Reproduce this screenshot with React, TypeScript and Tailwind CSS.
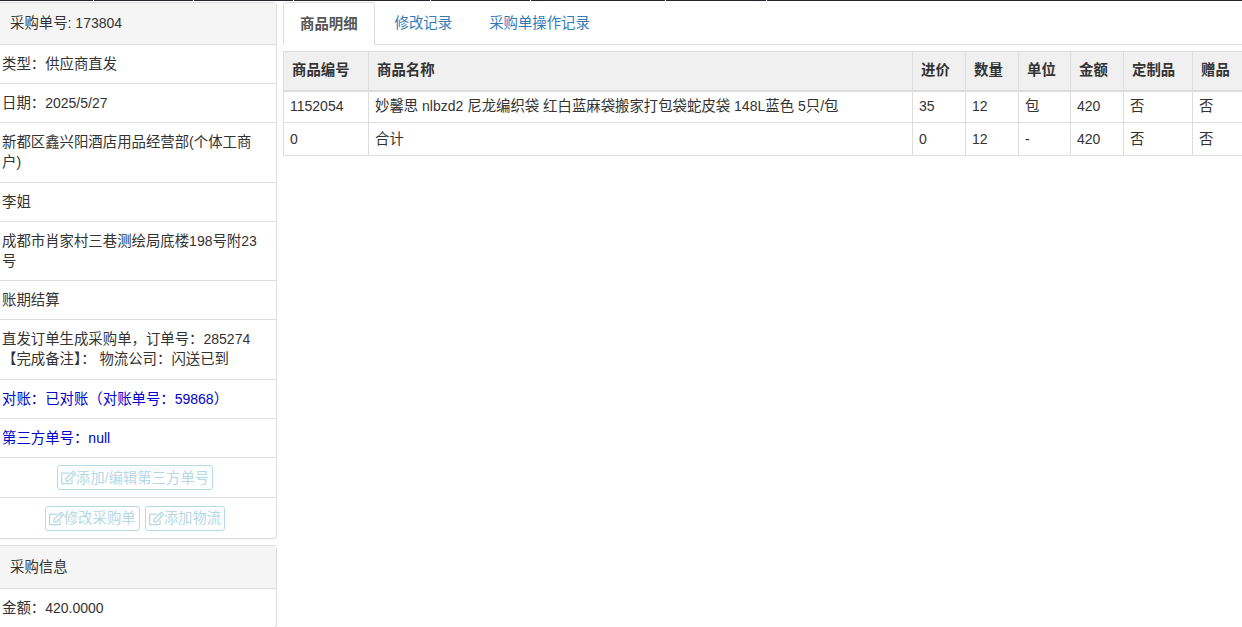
import { FaRegEdit } from 'react-icons/fa';

const font = "font-['Liberation_Sans','Noto_Sans_CJK_SC',sans-serif]";

const sideRows = [
    { text: '类型：供应商直发' },
    { text: '日期：2025/5/27' },
    { text: '新都区鑫兴阳酒店用品经营部(个体工商户)', tall: true },
    { text: '李姐' },
    { text: '成都市肖家村三巷测绘局底楼198号附23号' },
    { text: '账期结算' },
    { text: '直发订单生成采购单，订单号：285274 【完成备注】： 物流公司：闪送已到', tall: true },
    { text: '对账：已对账（对账单号：59868）', blue: true },
    { text: '第三方单号：null', blue: true },
];

const columns = [
    { label: '商品编号', width: 'w-[85px]' },
    { label: '商品名称', width: 'w-[544px]' },
    { label: '进价', width: 'w-[53px]' },
    { label: '数量', width: 'w-[53px]' },
    { label: '单位', width: 'w-[52px]' },
    { label: '金额', width: 'w-[53px]' },
    { label: '定制品', width: 'w-[69px]' },
    { label: '赠品', width: 'w-[50px]' },
];

const rows = [
    ['1152054', '妙馨思 nlbzd2 尼龙编织袋 红白蓝麻袋搬家打包袋蛇皮袋 148L蓝色 5只/包', '35', '12', '包', '420', '否', '否'],
    ['0', '合计', '0', '12', '-', '420', '否', '否'],
];

const topSegments = ['w-[93px]', 'w-[99px]', 'w-[99px]', 'w-[136px]', 'w-[99px]', 'w-[134px]', 'w-[100px]', 'flex-1'];

// chinese runs are a touch larger than the latin text around them
function Zh({ text }: { text: string }) {
    const parts = text.split(/([\u3000-\u9fff\uff00-\uffef]+)/);
    return (
        <>
            {parts.map((part, index) =>
                index % 2 === 1 ? (
                    <span key={index} className="text-[14.4px]">
                        {part}
                    </span>
                ) : (
                    part
                )
            )}
        </>
    );
}

function ActionButton({ label }: { label: string }) {
    return (
        <button className="inline-flex h-[25px] items-center rounded-[3px] border border-[#b5dbe8] px-[3px] text-[#b5d8e6]">
            <FaRegEdit className="h-[15px] w-[15px] shrink-0" />
            <Zh text={label} />
        </button>
    );
}

export default function App() {
    return (
        <div className={`${font} h-[627px] w-[1242px] overflow-hidden bg-white text-[14px] leading-[20px] text-[#333]`}>
            <div className="flex h-px gap-px">
                {topSegments.map((width, index) => (
                    <div key={index} className={`${width} bg-[#222733]`} />
                ))}
            </div>
            <div className="flex">
                {/* Left column */}
                <div className="w-[277px] shrink-0 pt-[1px]">
                    <div className="rounded-r-[4px] border-y border-r border-[#ddd] shadow-[0_1px_1px_rgba(0,0,0,0.05)]">
                        <div className="h-[42px] border-b border-[#ddd] bg-[#f5f5f5] px-[10px] py-[10px]">
                            <Zh text="采购单号: 173804" />
                        </div>
                        {sideRows.map((row) => (
                            <div
                                key={row.text}
                                className={`border-b border-[#ddd] pl-[2px] pr-[16px] pt-[9px] ${row.tall ? 'pb-[10px]' : 'pb-[9px]'} ${row.blue ? 'text-[#0000cc]' : ''}`}
                            >
                                <Zh text={row.text} />
                            </div>
                        ))}
                        <div className="flex h-[40px] items-center justify-center border-b border-[#ddd] pr-[6px]">
                            <ActionButton label="添加/编辑第三方单号" />
                        </div>
                        <div className="flex h-[40px] items-center justify-center gap-[5px] pr-[6px]">
                            <ActionButton label="修改采购单" />
                            <ActionButton label="添加物流" />
                        </div>
                    </div>
                    <div className="mt-[6px] rounded-r-[4px] border-y border-r border-[#ddd]">
                        <div className="h-[43px] border-b border-[#ddd] bg-[#f5f5f5] px-[10px] py-[11px]">
                            <Zh text="采购信息" />
                        </div>
                        <div className="py-[9px] pl-[2px]">
                            <Zh text="金额：420.0000" />
                        </div>
                    </div>
                </div>

                {/* Right column */}
                <div className="ml-[6px] min-w-0 flex-1 pt-[1px]">
                    <div className="flex h-[43px] border-b border-[#ddd]">
                        <div className="-mb-px h-[43px] rounded-t-[4px] border-x border-t border-[#ddd] bg-white px-[16px] py-[11px] font-bold text-[#555]">
                            <Zh text="商品明细" />
                        </div>
                        <div className="pl-[20px] pr-[18px] py-[11px] text-[#337ab7]">
                            <Zh text="修改记录" />
                        </div>
                        <div className="px-[19px] py-[11px] text-[#337ab7]">
                            <Zh text="采购单操作记录" />
                        </div>
                    </div>
                    <table className="mt-[6px] w-[959px] table-fixed border-collapse">
                        <thead>
                            <tr className="h-[39px] bg-[#f0f0f0]">
                                {columns.map((col, index) => (
                                    <th
                                        key={col.label}
                                        className={`${col.width} border border-b-2 border-[#ddd] px-[8px] pb-[2px] text-left font-bold ${index === 7 ? 'border-r-0' : ''}`}
                                    >
                                        <Zh text={col.label} />
                                    </th>
                                ))}
                            </tr>
                        </thead>
                        <tbody>
                            {rows.map((row, rowIndex) => (
                                <tr key={row[0]} className={rowIndex === 0 ? 'h-[32px]' : 'h-[33px]'}>
                                    {row.map((cell, index) => (
                                        <td
                                            key={index}
                                            className={`overflow-hidden whitespace-nowrap border border-[#ddd] px-[6px] ${rowIndex === 0 ? 'pb-[2px]' : ''} ${index === 7 ? 'border-r-0' : ''}`}
                                        >
                                            <Zh text={cell} />
                                        </td>
                                    ))}
                                </tr>
                            ))}
                        </tbody>
                    </table>
                </div>
            </div>
        </div>
    );
}
